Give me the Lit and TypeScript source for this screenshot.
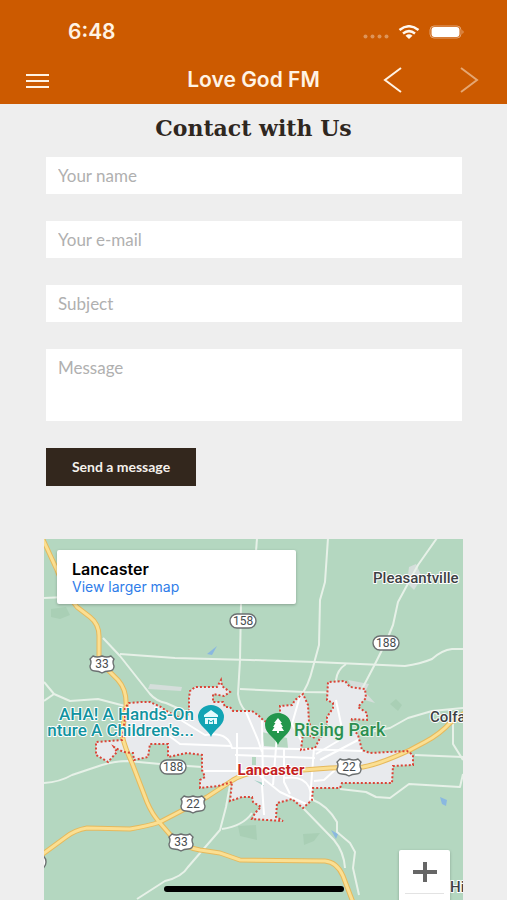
import { LitElement, html, css, svg } from "lit";
import { customElement } from "lit/decorators.js";

const CITY =
  "M125 718 L125 708 129 703 142 702 150 702 161 707 168 712 178 717 187 717 189 710 189 698 190 691 195 687 217 687 221 680 222 686 230 692 224 696 213 694 213 702 223 702 225 707 230 707 233 711 252 711 258 715 263 720 270 724 280 717 280 706 292 705 295 700 303 694 308 705 309 722 315 738 303 733 301 750 315 748 320 738 327 725 327 717 333 708 333 703 327 700 328 682 345 681 350 687 365 689 366 698 358 707 367 713 367 720 352 719 350 725 358 735 362 750 370 753 407 751 413 755 413 765 393 766 392 783 342 783 340 788 313 788 312 800 303 808 292 799 277 803 276 817 283 821 252 819 255 813 261 807 253 802 252 797 242 797 230 801 232 782 218 786 200 788 200 780 205 777 202 770 202 755 187 753 168 757 168 744 150 744 148 757 134 760 133 753 123 752 114 747 117 752 108 762 96 755 96 742 122 740Z";

const US33 =
  "M40 533 L57 570 Q66 594 77 607 L90 617 Q99 624 99 636 V655 Q100 664 108 670 L118 680 Q127 690 126 706 L122 735 Q125 748 132 763 L147 802 Q152 814 160 823 L173 838 Q184 847 200 850 L220 853 240 860 325 861 Q337 862 343 876 L354 905";
const US22 =
  "M40 856 L66 837 Q75 830 87 828 L130 829 Q148 826 160 822 L183 810 207 797 233 780 Q243 774 256 772 L303 770 330 768 363 767 Q380 764 410 750 L425 742 Q440 734 450 723 L466 712";

const COUNTRY_ROADS = [
  "M44 598 L66 597",
  "M44 682 L54 694 70 701 98 699 125 706",
  "M54 694 L44 701",
  "M103 638 L120 656 150 694 Q156 701 166 703 L200 718",
  "M120 654 L175 658 250 660 315 662 405 666 Q420 664 432 659 Q442 650 452 649 H466",
  "M241 604 L240 660 238 694 Q239 704 246 712 L263 740",
  "M240 689 L305 692 365 693",
  "M257 538 L256 552",
  "M328 538 L325 582 320 600 319 645 313 667 Q308 688 300 696 L290 728",
  "M437 538 L418 565 398 602 393 625 386 642 374 666 362 689",
  "M346 664 Q337 670 336 680 L333 700",
  "M44 783 Q60 782 72 775 L102 765 Q115 761 128 761 L160 764 202 767",
  "M137 899 L165 881 Q182 877 188 867 L220 830 226 807 230 785",
  "M222 829 Q243 826 252 813",
  "M463 757 L415 755",
  "M453 715 L453 744 463 760",
  "M463 774 L460 787 409 784 390 798 376 797 366 792 340 789",
  "M303 808 L334 840 Q344 852 345 868",
  "M313 800 Q327 805 337 822 L337 832 350 843 355 852 353 868 359 895",
  "M463 708 L432 711 408 718 390 728 370 732"
];

const STREETS = [
  "M168 712 L205 735 Q228 731 232 748 L302 749 362 751",
  "M168 735 L180 744 232 746",
  "M202 771 H250",
  "M237 733 V770",
  "M235 755 L315 758",
  "M262 720 L263 785",
  "M277 735 L273 785",
  "M284 748 V782 L290 794",
  "M246 712 L258 740 262 752",
  "M260 776 L280 792 306 804",
  "M284 778 Q303 775 309 787 L313 800",
  "M314 748 L310 800",
  "M262 785 L264 815",
  "M316 754 L338 741 341 724 336 700",
  "M320 760 L358 740",
  "M300 696 L292 724 302 742",
  "M335 770 L324 780 314 781"
];

const us = (x: number, y: number, n: string) => svg`
  <g transform="translate(${x} ${y})">
    <path class="sign" d="M-9 -8 Q-5 -6 0 -8 Q5 -6 9 -8 L12 -5 Q10 -2 12 2 Q12 7 7 7 Q3 7 0 9 Q-3 7 -7 7 Q-12 7 -12 2 Q-10 -2 -12 -5Z"></path>
    <text class="num" y="4">${n}</text>
  </g>`;

const state = (x: number, y: number, n: string) => svg`
  <g transform="translate(${x} ${y})">
    <rect class="sign" x="-13" y="-7" width="26" height="14" rx="7"></rect>
    <text class="num" y="4">${n}</text>
  </g>`;

@customElement("area-map")
export class AreaMap extends LitElement {
  static styles = css`
    :host {
      display: block;
      position: relative;
      overflow: hidden;
      background: #b4d7c0;
      font-family: Roboto, sans-serif;
    }
    .canvas {
      display: block;
      position: absolute;
      inset: 0;
      width: 100%;
      height: 100%;
    }
    .city { fill: #e8eaed; }
    .border {
      fill: none;
      stroke: #db4437;
      stroke-width: 2;
      stroke-dasharray: 2 2;
    }
    .country { fill: none; stroke: #e7f1e8; stroke-width: 2; stroke-linejoin: round; }
    .street { fill: none; stroke: #fff; stroke-width: 2; stroke-linejoin: round; }
    .casing { fill: none; stroke: #e6b95c; stroke-width: 5; stroke-linejoin: round; }
    .highway { fill: none; stroke: #fbdf92; stroke-width: 3; stroke-linejoin: round; }
    .sign { fill: #fff; stroke: #6b6f70; stroke-width: 1.4; }
    .num { font-size: 12px; fill: #484c4f; text-anchor: middle; }
    .label { stroke-width: 2; stroke: #fff; paint-order: stroke; stroke-linejoin: round; font-weight: 500; }
    .town { font-size: 15px; fill: #3c4043; }
    .sight { font-size: 17px; fill: #12939f; }
    .park { font-size: 18px; fill: #2c8f50; stroke: #e4f3e8; }
    .center { font-size: 15px; fill: #c5221f; font-weight: 700; }
    .card {
      position: absolute;
      top: 11px;
      left: 13px;
      width: 57%;
      box-sizing: border-box;
      padding: 10px 15px 8px;
      background: #fff;
      border-radius: 2px;
      box-shadow: 0 1px 3px rgba(0, 0, 0, 0.25);
      font-family: Inter, sans-serif;
    }
    .place {
      margin: 0;
      font-size: 16px;
      line-height: 18px;
      font-weight: 600;
      color: #000;
    }
    .larger {
      display: block;
      font-size: 14px;
      line-height: 18px;
      color: #2f7de9;
      text-decoration: none;
    }
    .zoom {
      position: absolute;
      right: 13px;
      top: 311px;
      width: 51px;
      background: #fff;
      border-radius: 2px;
      box-shadow: 0 1px 3px rgba(0, 0, 0, 0.25);
    }
    .plus {
      display: flex;
      align-items: center;
      justify-content: center;
      width: 100%;
      height: 43px;
      padding: 0;
      border: 0;
      background: none;
    }
    .rule { height: 1px; margin: 0 6px 20px; background: #e3e3e3; }
  `;

  render() {
    return html`
      <svg class="canvas" viewBox="44 539 419 361" preserveAspectRatio="xMinYMin slice" role="img" aria-label="Map of Lancaster">
        <g fill="#a9cfb5">
          <path d="M51 609 L66 607 70 615 60 619 51 617Z"></path>
          <path d="M390 704 L396 699 402 705 398 711Z"></path>
          <path d="M303 834 L320 833 314 841 304 845Z"></path>
          <path d="M238 826 L256 825 257 840 240 836Z"></path>
        </g>
        <g fill="#d5dedb">
          <path d="M150 684 L182 687 181 691 148 689Z"></path>
          <path d="M409 567 L416 564 422 577 414 590 407 583Z"></path>
          <path d="M348 680 L369 684 365 692 375 703 358 698Z"></path>
        </g>
        <g fill="#8ab8e0">
          <path d="M207 654 L217 646 212 655Z"></path>
          <path d="M440 797 L447 800 446 806 442 804Z"></path>
          <path d="M331 830 L338 834 336 839Z"></path>
        </g>
        ${COUNTRY_ROADS.map((d) => svg`<path class="country" d=${d}></path>`)}
        <path class="city" d=${CITY}></path>
        <path fill="#b4d7c0" d="M262 732 L287 738 288 748 264 746Z M252 757 H256 V765 H252Z"></path>
        <path fill="#9fcfc4" d="M254 780 L263 783 264 786Z"></path>
        ${STREETS.map((d) => svg`<path class="street" d=${d}></path>`)}
        <path class="casing" d=${US33}></path>
        <path class="casing" d=${US22}></path>
        <path class="highway" d=${US33}></path>
        <path class="highway" d=${US22}></path>
        <path class="border" d=${CITY}></path>

        ${state(243, 621, "158")} ${state(386, 643, "188")} ${state(173, 767, "188")}
        ${us(102, 664, "33")} ${us(193, 804, "22")} ${us(181, 842, "33")} ${us(349, 767, "22")}
        <circle class="sign" cx="38" cy="862" r="8"></circle>

        <text class="label town" x="373" y="583">Pleasantville</text>
        <text class="label town" x="430" y="722">Colfa</text>
        <text class="label town" x="450" y="892">Hi</text>
        <text class="label sight" text-anchor="end" x="194" y="720">AHA! A Hands-On</text>
        <text class="label sight" text-anchor="end" x="194" y="736">nture A Children's...</text>
        <text class="label park" x="294" y="736">Rising Park</text>
        <text class="label center" text-anchor="middle" x="271" y="775">Lancaster</text>

        <path fill="#12a4b4" d="M211 737 C209 730 198 726 198 717 A13 12 0 0 1 224 717 C224 726 213 730 211 737Z"></path>
        <path fill="#e4fbfd" d="M204 715 L211 710 218 715 V717 H204Z M205 718 H217 V724 H205Z"></path>
        <path fill="none" stroke="#12a4b4" d="M208.500 724 V720 L211 722 213.500 720 V724"></path>
        <path fill="#23964c" d="M278 745 C276 738 265 734 265 725 A13 12 0 0 1 291 725 C291 734 280 738 278 745Z"></path>
        <path fill="#fff" d="M278 718 L282 723 H280.500 L283 727 H281.500 L284 731 H279 V733 H277 V731 H272 L274.500 727 H273 L275.500 723 H274Z"></path>
      </svg>
      <div class="card">
        <h2 class="place">Lancaster</h2>
        <a class="larger" href="#map">View larger map</a>
      </div>
      <div class="zoom">
        <button class="plus" type="button" aria-label="Zoom in">
          <svg width="24" height="20" viewBox="0 0 24 20"><path d="M0 10 H24 M12 0 V20" stroke="#666" stroke-width="4"></path></svg>
        </button>
        <div class="rule"></div>
      </div>
    `;
  }
}

@customElement("app-root")
export class AppRoot extends LitElement {
  static styles = css`
    :host {
      display: flex;
      flex-direction: column;
      min-height: 100vh;
      background: #eee;
      font-family: Lato, sans-serif;
    }
    .top {
      background: #cc5a00;
      color: #fff3e4;
      font-family: Inter, sans-serif;
    }
    .status {
      display: flex;
      align-items: center;
      justify-content: space-between;
      height: 56px;
      padding: 8px 42px 0 68px;
      box-sizing: border-box;
    }
    .time { font-size: 21px; line-height: 24px; font-weight: 600; }
    .signals { display: flex; align-items: center; gap: 9px; }
    .nav {
      display: grid;
      grid-template-columns: 1fr auto 1fr;
      align-items: center;
      height: 48px;
      padding: 0 25px;
    }
    .title { margin: 0; font-size: 21px; line-height: 24px; font-weight: 600; }
    .icon {
      display: flex;
      padding: 0;
      border: 0;
      background: none;
      color: inherit;
    }
    .arrows { display: flex; justify-content: flex-end; gap: 56px; padding-right: 3px; }
    .faded { opacity: 0.5; }
    .heading {
      margin: 0;
      padding: 12px 0 17px;
      text-align: center;
      font: 700 22px/24px "DejaVu Serif", serif;
      color: #2f271f;
    }
    .form {
      display: flex;
      flex-direction: column;
      align-items: flex-start;
      gap: 27px;
      padding: 0 45px 0 46px;
    }
    .field {
      display: block;
      box-sizing: border-box;
      width: 100%;
      height: 37px;
      margin: 0;
      padding: 0 12px;
      border: 0;
      border-radius: 0;
      background: #fff;
      color: #333;
      font: 400 17px/20px Lato, sans-serif;
      resize: none;
    }
    .area { height: 72px; padding: 9px 12px; }
    .field::placeholder { color: #b0b0b0; opacity: 1; }
    .send {
      height: 38px;
      width: 150px;
      padding: 0;
      border: 0;
      background: #33271d;
      color: #f5f1ec;
      font: 700 14px/18px Lato, sans-serif;
    }
    .map { flex: 1 0 360px; margin: 53px 44px 0; }
    .home {
      position: fixed;
      left: 50%;
      bottom: 8px;
      width: 180px;
      height: 6px;
      margin-left: -90px;
      border-radius: 3px;
      background: #000;
    }
  `;

  render() {
    return html`
      <header class="top">
        <div class="status">
          <span class="time">6:48</span>
          <span class="signals">
            <svg width="26" height="16" viewBox="0 0 26 16" fill="#fff" opacity="0.35">
              <circle cx="2.500" cy="12.500" r="2"></circle><circle cx="9.500" cy="12.500" r="2"></circle>
              <circle cx="16.500" cy="12.500" r="2"></circle><circle cx="23.500" cy="12.500" r="2"></circle>
            </svg>
            <svg width="22" height="14" viewBox="0 0 22 14">
              <path d="M1.500 5 Q11 -2.500 20.500 5 M5 8.500 Q11 3.800 17 8.500" fill="none" stroke="#fff8ef" stroke-width="2.500"></path>
              <path d="M7.500 10.700 Q11 8 14.500 10.700 L11 14Z" fill="#fff8ef"></path>
            </svg>
            <svg width="36" height="14" viewBox="0 0 36 14">
              <rect x="1" y="1" width="31" height="12" rx="4" fill="none" stroke="#fff" stroke-opacity="0.45"></rect>
              <rect x="2.500" y="2" width="28" height="10" rx="3" fill="#fff"></rect>
              <path d="M33.500 5 Q35.500 7 33.500 9Z" fill="#fff" fill-opacity="0.5"></path>
            </svg>
          </span>
        </div>
        <nav class="nav">
          <button class="icon" type="button" aria-label="Menu">
            <svg width="24" height="18" viewBox="0 0 24 18"><path d="M1 4 H24 M1 10 H24 M1 16 H24" stroke="currentColor" stroke-width="2"></path></svg>
          </button>
          <h1 class="title">Love God FM</h1>
          <span class="arrows">
            <button class="icon" type="button" aria-label="Back">
              <svg width="20" height="28" viewBox="0 0 20 28"><path d="M18 2 L2 14 18 26" fill="none" stroke="currentColor" stroke-width="2"></path></svg>
            </button>
            <button class="icon faded" type="button" aria-label="Forward">
              <svg width="20" height="28" viewBox="0 0 20 28"><path d="M2 2 L18 14 2 26" fill="none" stroke="currentColor" stroke-width="2"></path></svg>
            </button>
          </span>
        </nav>
      </header>
      <h2 class="heading">Contact with Us</h2>
      <form class="form">
        <input class="field" type="text" placeholder="Your name" aria-label="Your name" />
        <input class="field" type="email" placeholder="Your e-mail" aria-label="Your e-mail" />
        <input class="field" type="text" placeholder="Subject" aria-label="Subject" />
        <textarea class="field area" placeholder="Message" aria-label="Message"></textarea>
        <button class="send" type="button">Send a message</button>
      </form>
      <area-map class="map"></area-map>
      <div class="home"></div>
    `;
  }
}
